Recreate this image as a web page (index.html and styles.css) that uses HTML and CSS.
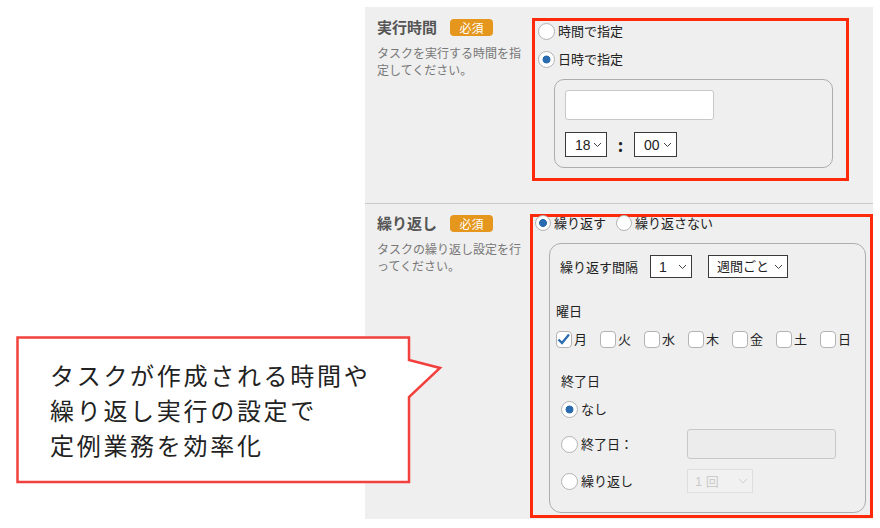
FILE: index.html
```html
<!DOCTYPE html>
<html lang="ja">
<head>
  <meta charset="UTF-8">
  <meta name="viewport" content="width=device-width, initial-scale=1.0">
  <title>タスクの実行設定</title>
  <link rel="stylesheet" href="styles.css">
</head>
<body>
  <div class="settings">
    <section class="setting-row row-time">
      <div class="setting-label">
        <div class="label-head">
          <span class="label-title">実行時間</span>
          <span class="badge">必須</span>
        </div>
        <p class="label-desc">タスクを実行する時間を指定してください。</p>
      </div>
      <div class="setting-field field-time">
        <div class="radio-list">
          <label class="radio-line"><input type="radio" name="timing">時間で指定</label>
          <label class="radio-line"><input type="radio" name="timing" checked>日時で指定</label>
        </div>
        <div class="subbox">
          <input type="text" class="date-input">
          <div class="time-row">
            <select class="sel sel-hour"><option>18</option></select>
            <span class="colon">:</span>
            <select class="sel sel-min"><option>00</option></select>
          </div>
        </div>
      </div>
    </section>

    <section class="setting-row row-repeat">
      <div class="setting-label">
        <div class="label-head">
          <span class="label-title">繰り返し</span>
          <span class="badge">必須</span>
        </div>
        <p class="label-desc">タスクの繰り返し設定を行ってください。</p>
      </div>
      <div class="setting-field field-repeat">
        <div class="radio-inline">
          <label class="radio-line"><input type="radio" name="repeat" checked>繰り返す</label>
          <label class="radio-line"><input type="radio" name="repeat">繰り返さない</label>
        </div>
        <div class="subbox">
          <div class="interval-row">
            <span>繰り返す間隔</span>
            <select class="sel sel-num"><option>1</option></select>
            <select class="sel sel-unit"><option>週間ごと</option></select>
          </div>
          <p class="group-title">曜日</p>
          <div class="weekdays">
            <label class="check"><input type="checkbox" checked>月</label>
            <label class="check"><input type="checkbox">火</label>
            <label class="check"><input type="checkbox">水</label>
            <label class="check"><input type="checkbox">木</label>
            <label class="check"><input type="checkbox">金</label>
            <label class="check"><input type="checkbox">土</label>
            <label class="check"><input type="checkbox">日</label>
          </div>
          <div class="end-block">
            <p class="group-title">終了日</p>
            <div class="end-grid">
              <label class="radio-line"><input type="radio" name="end" checked>なし</label>
              <span></span>
              <label class="radio-line"><input type="radio" name="end">終了日：</label>
              <input type="text" class="date-input" disabled>
              <label class="radio-line"><input type="radio" name="end">繰り返し</label>
              <select class="sel sel-count" disabled><option>1 回</option></select>
            </div>
          </div>
        </div>
      </div>
    </section>
  </div>

  <div class="callout">
    <svg class="callout-shape" width="428" height="148" viewBox="0 0 428 148">
      <path d="M1.5 1.5 H393 V24 L424 32 L393 61 V146 H1.5 Z" fill="#fff" stroke="#f2403c" stroke-width="2.5"/>
    </svg>
    <p class="callout-text">タスクが作成される時間や<br>繰り返し実行の設定で<br>定例業務を効率化</p>
  </div>
</body>
</html>
```

FILE: styles.css
```css
* {
  box-sizing: border-box;
}

body {
  margin: 0;
  background: #fff;
  font-family: "Noto Sans CJK JP", "Noto Sans", sans-serif;
  color: #222;
}

/* settings panel */
.settings {
  width: 508px;
  margin: 7px 0 0 365px;
  background: #efefef;
}

.setting-row {
  display: flex;
  align-items: flex-start;
}

.row-time {
  padding: 11px 0 22px;
  border-bottom: 1px solid #c9c9c9;
}

.row-repeat {
  padding: 10px 0 1px;
}

.setting-label {
  width: 167px;
  flex-shrink: 0;
  padding-left: 12px;
}

.label-head {
  display: flex;
  align-items: center;
  gap: 13px;
  height: 18px;
}

.label-title {
  font-size: 15px;
  font-weight: bold;
  line-height: 18px;
  color: #555;
}

.badge {
  width: 43px;
  border-radius: 4px;
  background: #e5961c;
  color: #fff;
  font-size: 12px;
  line-height: 17px;
  text-align: center;
}

.label-desc {
  width: 150px;
  margin: 8px 0 0;
  font-size: 12px;
  line-height: 17px;
  color: #777;
  line-break: loose;
}

/* highlighted field */
.setting-field {
  border: 3px solid #ff2a0a;
}

.field-time {
  width: 317px;
  padding: 0 0 10px 3px;
}

.field-repeat {
  width: 343px;
  margin-left: -2px;
  padding: 0 0 2px 2px;
}

.radio-list {
  display: flex;
  flex-direction: column;
  gap: 8px;
}

.radio-line {
  display: flex;
  align-items: center;
  gap: 3px;
  font-size: 13px;
  line-height: 20px;
}

.radio-line input {
  appearance: none;
  flex-shrink: 0;
  width: 17px;
  height: 17px;
  margin: 0;
  border: 1.5px solid #b3b3b3;
  border-radius: 50%;
  background: #fff;
}

.radio-line input:checked {
  background: radial-gradient(circle, #2b6cb0 0 3.6px, #fff 4.3px);
}

.radio-inline {
  display: flex;
  gap: 10px;
  height: 16px;
  margin-top: -2px;
  align-items: center;
}

.radio-inline .radio-line {
  line-height: 16px;
}

.radio-inline .radio-line input {
  width: 16px;
  height: 16px;
}

.subbox {
  margin-top: 10px;
  border: 1px solid #adadad;
  border-radius: 10px;
}

.field-time .subbox {
  width: 279px;
  margin-left: 16px;
  padding: 10px;
}

.field-repeat .subbox {
  width: 317px;
  margin: 12px 0 0 14px;
  padding: 11px 0 19px 6px;
  border-radius: 12px;
}

.date-input {
  display: block;
  width: 149px;
  height: 30px;
  margin: 0;
  border: 1px solid #c8c8c8;
  border-radius: 3px;
  background: #fff;
}

.date-input:disabled {
  background: #ececec;
}

/* selects */
.sel {
  appearance: none;
  height: 25px;
  margin: 0;
  padding: 0 16px 0 9px;
  border: 1px solid #3a3a3a;
  border-radius: 0;
  background: #fff url("data:image/svg+xml,%3Csvg xmlns='http://www.w3.org/2000/svg' width='9' height='6'%3E%3Cpath d='M1 1l3.5 3.5L8 1' fill='none' stroke='%23444' stroke-width='1'/%3E%3C/svg%3E") no-repeat right 4px center;
  font-family: "Liberation Sans", "Noto Sans CJK JP", sans-serif;
  font-size: 14px;
  color: #222;
}

.sel-hour {
  width: 42px;
}

.sel-min {
  width: 43px;
}

.sel-num {
  width: 42px;
  height: 23px;
  padding-left: 8px;
}

.sel-unit {
  width: 80px;
  height: 23px;
  margin-left: 4px;
  padding-left: 8px;
  font-size: 13px;
}

.sel-count {
  width: 66px;
  height: 24px;
  padding-left: 7px;
  border-color: #d8d8d8;
  background-color: #f2f2f2;
  background-image: url("data:image/svg+xml,%3Csvg xmlns='http://www.w3.org/2000/svg' width='10' height='6'%3E%3Cpath d='M1 1l4 4 4-4' fill='none' stroke='%23c4c4c4' stroke-width='1'/%3E%3C/svg%3E");
  color: #bdbdbd;
  font-size: 13px;
}

.time-row {
  display: flex;
  align-items: center;
  margin-top: 12px;
}

.colon {
  width: 27px;
  font-size: 17px;
  font-weight: bold;
  line-height: 25px;
  text-align: center;
}

/* repeat settings */
.interval-row {
  display: flex;
  align-items: center;
  gap: 12px;
  padding-left: 4px;
  font-size: 13px;
  line-height: 23px;
}

.group-title {
  margin: 24px 0 0;
  font-size: 13px;
  line-height: 18px;
}

.weekdays {
  display: flex;
  gap: 13px;
  margin-top: 10px;
}

.check {
  display: flex;
  align-items: center;
  gap: 2px;
  font-size: 13px;
  line-height: 18px;
}

.check input {
  appearance: none;
  width: 16px;
  height: 17px;
  margin: 0;
  border: 1.5px solid #b3b3b3;
  border-radius: 4px;
  background: #fff;
}

.check input:checked {
  background: #fff url("data:image/svg+xml,%3Csvg xmlns='http://www.w3.org/2000/svg' width='14' height='14'%3E%3Cpath d='M1.5 7.5l3.5 3.5 7-8.5' fill='none' stroke='%232b6cb0' stroke-width='2.3'/%3E%3C/svg%3E") no-repeat center;
}

.end-block {
  padding-left: 5px;
}

.end-grid {
  display: grid;
  grid-template-columns: 126px auto;
  align-items: center;
  justify-items: start;
  row-gap: 10px;
  margin-top: 9px;
}

/* callout */
.callout {
  position: absolute;
  left: 16px;
  top: 336px;
  width: 428px;
  height: 148px;
}

.callout-shape {
  position: absolute;
  top: 0;
  left: 0;
}

.callout-text {
  position: relative;
  margin: 0;
  padding: 21px 0 0 34px;
  font-size: 24px;
  line-height: 35px;
  letter-spacing: 2.7px;
  color: #222;
}
```
